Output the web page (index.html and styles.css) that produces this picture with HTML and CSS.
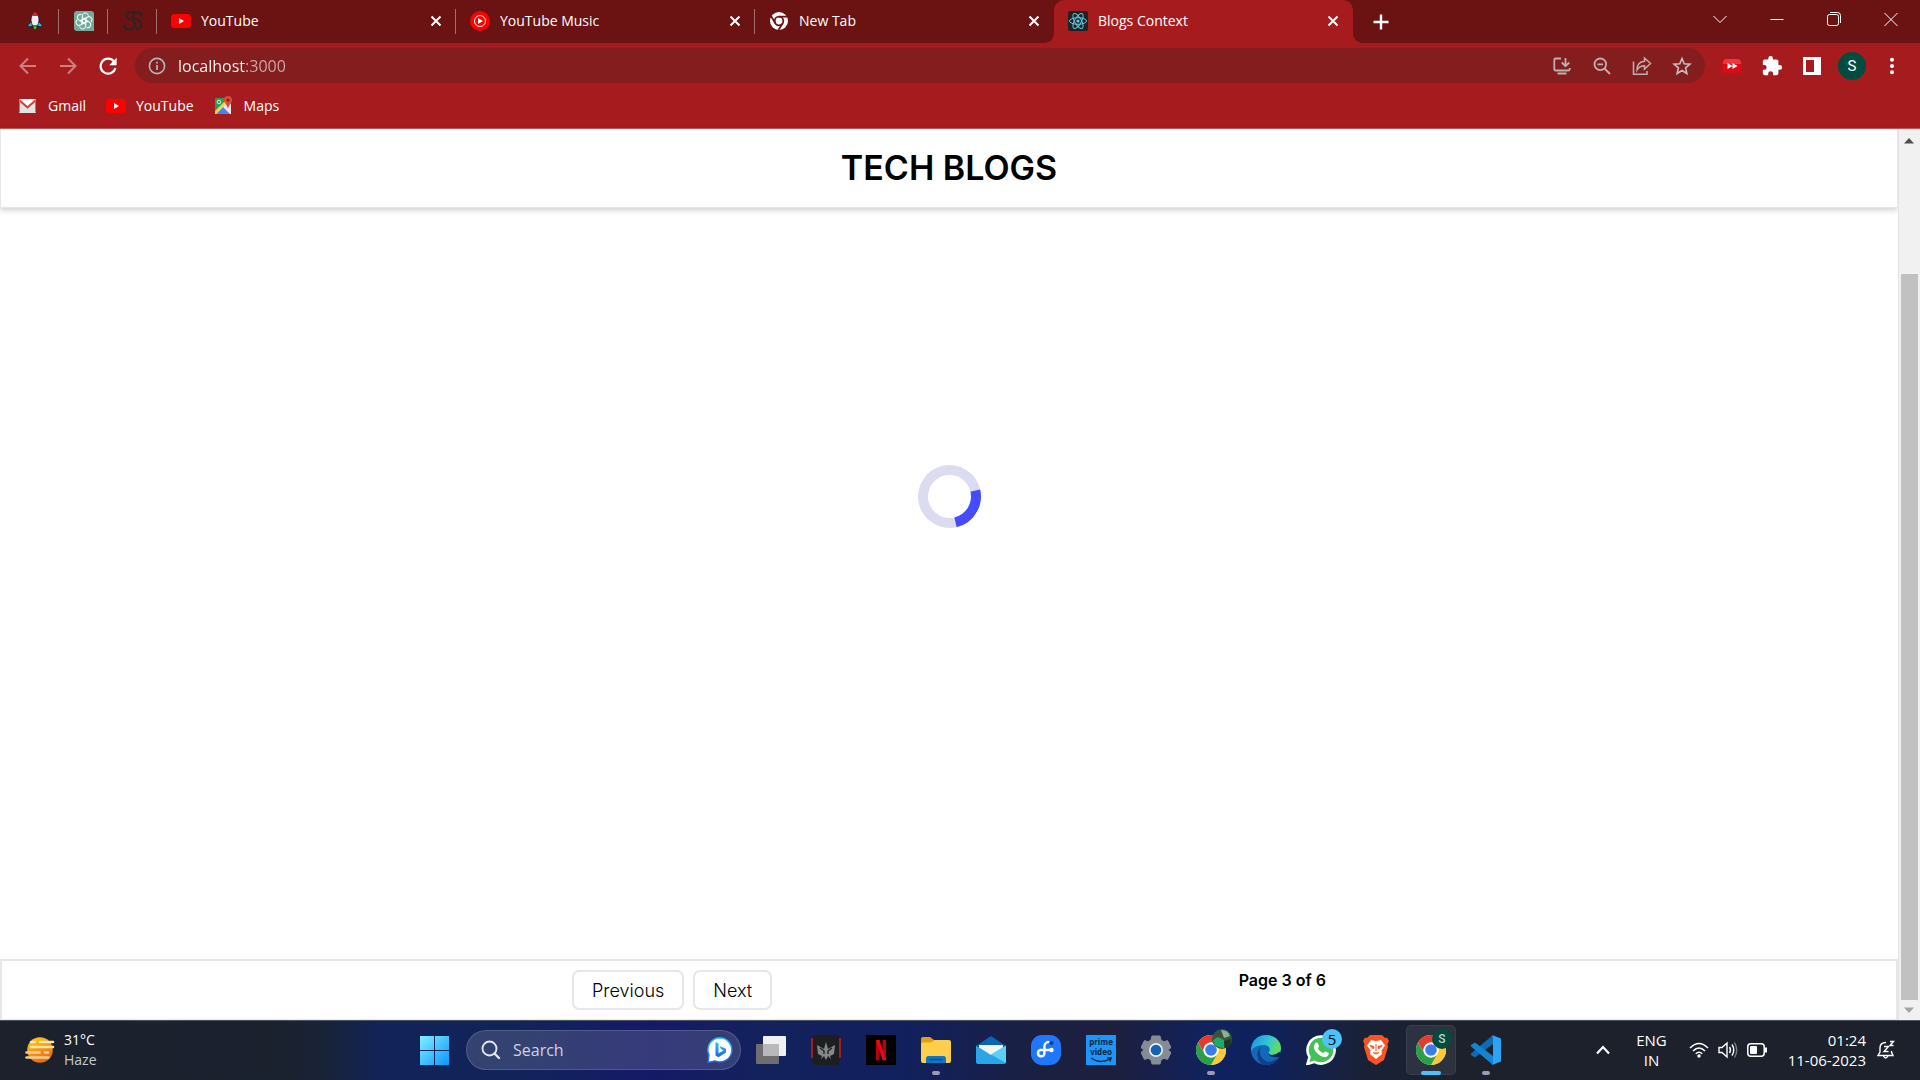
FILE: index.html
```html
<!DOCTYPE html>
<html lang="en">
<head>
<meta charset="utf-8">
<title>Blogs Context</title>
<link rel="stylesheet" href="styles.css">
</head>
<body>
<svg class="sprite" aria-hidden="true">
  <symbol id="close" viewBox="0 0 16 16"><path d="M3.5 3.5l9 9M12.5 3.5l-9 9" stroke="#fff" stroke-width="2" fill="none"/></symbol>
  <symbol id="youtube" viewBox="0 0 20 20"><rect y="3" width="20" height="14" rx="3.5" fill="#f00"/><path d="M8 7l5 3-5 3z" fill="#fff"/></symbol>
  <symbol id="chrome" viewBox="0 0 30 30">
    <circle cx="15" cy="15" r="15" fill="#fff"/>
    <path d="M2 7.5A15 15 0 0 1 28 7.500H15a7.500 7.500 0 0 0-6.500 11.200z" fill="#e33b2e"/>
    <path d="M28 7.500A15 15 0 0 1 15 30l6.500-11.300A7.500 7.500 0 0 0 15 7.500z" fill="#fcc934"/>
    <path d="M15 30A15 15 0 0 1 2 7.500l6.500 11.200a7.500 7.500 0 0 0 13 0z" fill="#2c9d49"/>
    <circle cx="15" cy="15" r="7.500" fill="#fff"/><circle cx="15" cy="15" r="5.800" fill="#3b7de8"/>
  </symbol>
</svg>

<header class="browser">
  <div class="tabstrip">
    <button class="pin" aria-label="Rocket">
      <svg width="20" height="20" viewBox="0 0 20 20"><path d="M7 10l-4 4v2l5-1zM13 10l4 4v2l-5-1z" fill="#2bb3f3" stroke="#111" stroke-width=".7"/><path d="M10 1c3 2 4 5 4 8 0 2-1 5-2 6H8c-1-1-2-4-2-6 0-3 1-6 4-8z" fill="#eef1f5" stroke="#111" stroke-width=".8"/><path d="M10 1c1.500 1 2.500 2.500 3 4H7c.5-1.500 1.500-3 3-4z" fill="#d8222a"/><path d="M8 15h4c0 2-1 3-2 4-1-1-2-2-2-4z" fill="#48cf2c" stroke="#111" stroke-width=".6"/></svg>
    </button>
    <button class="pin" aria-label="ChatGPT">
      <svg width="20" height="20" viewBox="0 0 20 20"><path d="M3 0h14a3 3 0 0 1 3 3v17H3a3 3 0 0 1-3-3V3a3 3 0 0 1 3-3z" fill="#74aa9c"/><g fill="none" stroke="#fff" stroke-width="1"><path id="k" d="M8.300 7.500V4.800a3 3 0 0 1 4.500-2.400 3 3 0 0 1 1.600 2.200M8.300 7.500v4l3.400 2"/><use href="#k" transform="rotate(60 10 10)"/><use href="#k" transform="rotate(120 10 10)"/><use href="#k" transform="rotate(180 10 10)"/><use href="#k" transform="rotate(240 10 10)"/><use href="#k" transform="rotate(300 10 10)"/></g></svg>
    </button>
    <button class="pin" aria-label="SS">
      <svg width="20" height="20" viewBox="0 0 20 20" fill="none" stroke="#2c2426"><path d="M13 1.500C9 0 2 1 3 5c1 3 8 3.500 9 7 1 4-3 7-7 6.500-2 0-4-1.500-4-3.500" stroke-width="2"/><path d="M18.500 5c0-2.500-2.500-4-5-3.500-4 .5-5 4-2 6 3 1.500 7 2 7 6 0 3-3 4.500-6 4.500" stroke-width="1.800"/><path d="M0 15h3M17 4.500h3" stroke-width="2"/></svg>
    </button>
    <div class="tab"><svg width="20" height="20"><use href="#youtube"/></svg><span class="tab-title">YouTube</span><button class="icon-btn" aria-label="Close tab"><svg width="16" height="16"><use href="#close"/></svg></button></div>
    <div class="tab"><svg width="20" height="20" viewBox="0 0 20 20"><circle cx="10" cy="10" r="10" fill="#f00"/><circle cx="10" cy="10" r="5.500" fill="none" stroke="#fff"/><path d="M8 7l5 3-5 3z" fill="#fff"/></svg><span class="tab-title">YouTube Music</span><button class="icon-btn" aria-label="Close tab"><svg width="16" height="16"><use href="#close"/></svg></button></div>
    <div class="tab before-active"><svg width="20" height="20" viewBox="0 0 20 20"><circle cx="10" cy="10" r="9" fill="#fff"/><circle cx="10" cy="10" r="4.300" fill="none" stroke="#6b1212" stroke-width="1.800"/><path d="M10 5.700h9M6.300 12.200L2 5M13.700 12.200L9.500 19" stroke="#6b1212" stroke-width="1.700"/></svg><span class="tab-title">New Tab</span><button class="icon-btn" aria-label="Close tab"><svg width="16" height="16"><use href="#close"/></svg></button></div>
    <div class="tab active"><svg width="20" height="20" viewBox="0 0 20 20"><rect width="20" height="20" rx="2" fill="#222"/><g fill="none" stroke="#5ccbe6" stroke-width="1"><ellipse cx="10" cy="10" rx="8.500" ry="3.300"/><ellipse cx="10" cy="10" rx="8.500" ry="3.300" transform="rotate(60 10 10)"/><ellipse cx="10" cy="10" rx="8.500" ry="3.300" transform="rotate(120 10 10)"/></g><circle cx="10" cy="10" r="1.600" fill="#5ccbe6"/></svg><span class="tab-title">Blogs Context</span><button class="icon-btn" aria-label="Close tab"><svg width="16" height="16"><use href="#close"/></svg></button></div>
    <button class="new-tab" aria-label="New tab"><svg width="16" height="16" viewBox="0 0 16 16"><path d="M8 .5v15M.5 8h15" stroke="#fff" stroke-width="2.400"/></svg></button>
    <div class="window-controls">
      <button aria-label="Search tabs"><svg width="14" height="14" viewBox="0 0 14 14"><path d="M.5 4L7 10.500 13.500 4"/></svg></button>
      <button aria-label="Minimize"><svg width="14" height="14" viewBox="0 0 14 14"><path d="M.5 7.500h13"/></svg></button>
      <button aria-label="Restore"><svg width="14" height="14" viewBox="0 0 14 14"><rect x=".5" y="2.500" width="11" height="11" rx="2"/><path d="M3 .5h7.500a3 3 0 0 1 3 3V11"/></svg></button>
      <button aria-label="Close"><svg width="14" height="14" viewBox="0 0 14 14"><path d="M.5 1l13 13M13.500 1l-13 13"/></svg></button>
    </div>
  </div>

  <div class="toolbar">
    <button class="tool" aria-label="Back"><svg width="18" height="18" viewBox="0 0 18 18" class="faded"><path d="M17 9H2M9 1.500L1.500 9 9 16.500"/></svg></button>
    <button class="tool" aria-label="Forward"><svg width="18" height="18" viewBox="0 0 18 18" class="faded"><path d="M1 9h15M9 1.500L16.500 9 9 16.500"/></svg></button>
    <button class="tool" aria-label="Reload"><svg width="18" height="18" viewBox="0 0 18 18" fill="none"><path d="M15 4.500A7.500 7.500 0 1 0 16.400 11" stroke="#fff" stroke-width="2.200"/><path d="M17.600.8v7.400h-7.400z" fill="#fff"/></svg></button>
    <div class="omnibox">
      <svg width="18" height="18" viewBox="0 0 18 18"><circle cx="9" cy="9" r="7.600" fill="none" stroke="#b3b3b8" stroke-width="1.600"/><path d="M9 8v5M9 4.800v1.800" stroke="#b3b3b8" stroke-width="1.800"/></svg>
      <input class="url" type="text" value="localhost:3000" aria-label="Address">
      <button class="tool" aria-label="Install app"><svg width="18" height="18" viewBox="0 0 18 18" fill="none" stroke="#bdb0b0" stroke-width="1.800"><path d="M8 1.500H2.500Q1.300 1.500 1.300 2.700v9.600q0 1.200 1.200 1.200h13q1.200 0 1.200-1.200V11M12.500 1v7.500M8.800 5.500l3.700 3.700 3.700-3.700"/><path d="M4.500 15.500h9v2h-9z" fill="#bdb0b0" stroke="none"/></svg></button>
      <button class="tool" aria-label="Zoom"><svg width="18" height="18" viewBox="0 0 18 18" fill="none" stroke="#bdb0b0" stroke-width="1.800"><circle cx="7.300" cy="7.300" r="5.800"/><path d="M11.500 11.500l5.500 5.500M4.500 7.300h5.600"/></svg></button>
      <button class="tool" aria-label="Share"><svg width="20" height="20" viewBox="0 0 20 20" fill="none" stroke="#bdb0b0" stroke-width="1.500"><path d="M1.500 5.500v12.800h13.500V15M12.500 2l6 5.500-6 5.500v-3.200c-4 0-6 1.500-7.500 4.200 0-5 2.500-8.500 7.500-8.800z"/></svg></button>
      <button class="tool" aria-label="Bookmark"><svg width="20" height="20" viewBox="0 0 20 20" fill="none" stroke="#c9bcbc" stroke-width="1.600"><path d="M10 2.500l2.200 5.300 5.700.4-4.300 3.700 1.300 5.600-4.900-3-4.900 3 1.300-5.600-4.300-3.700 5.700-.4z"/></svg></button>
    </div>
    <div class="extensions">
      <button class="tool" aria-label="Ad speedup"><svg width="20" height="20" viewBox="0 0 20 20"><rect y="3" width="20" height="14" rx="3.500" fill="#d80b16"/><path d="M1 7q0-4 4-4h10q4 0 4 4v1H1z" fill="#f0353c"/><path d="M5.500 7l5 3-5 3zM10.500 7l5 3-5 3z" fill="#fff"/></svg></button>
      <button class="tool" aria-label="Extensions"><svg width="22" height="22" viewBox="0 0 24 24" fill="#fff"><path d="M20.500 11H19V7a2 2 0 0 0-2-2h-4V3.500a2.500 2.500 0 0 0-5 0V5H4a2 2 0 0 0-2 2v3.800h1.500a2.700 2.700 0 0 1 0 5.400H2V20a2 2 0 0 0 2 2h3.800v-1.500a2.700 2.700 0 0 1 5.400 0V22H17a2 2 0 0 0 2-2v-4h1.500a2.500 2.500 0 0 0 0-5z"/></svg></button>
      <button class="tool" aria-label="Side panel"><svg width="18" height="18" viewBox="0 0 18 18"><path d="M0 0h18v18H0zM3 3v12h8V3z" fill="#fff" fill-rule="evenodd"/></svg></button>
      <button class="tool" aria-label="Profile"><span class="avatar">S</span></button>
      <button class="tool" aria-label="Menu"><svg width="6" height="18" viewBox="0 0 6 18" fill="#fff"><circle cx="3" cy="2.800" r="2"/><circle cx="3" cy="9" r="2"/><circle cx="3" cy="15.200" r="2"/></svg></button>
    </div>
  </div>

  <nav class="bookmarks">
    <a href="#"><svg width="20" height="20" viewBox="0 0 20 20"><rect x="1" y="3" width="17" height="14" rx="1" fill="#e3e3e3"/><path d="M2 3h15l-7.500 7z" fill="#fff"/><path d="M1 4l8.500 7.500L18 4" fill="none" stroke="#d93c32" stroke-width="2"/><path d="M1.500 16V4M17.500 16V4" stroke="#d8685f"/></svg>Gmail</a>
    <a href="#"><svg width="20" height="20"><use href="#youtube"/></svg>YouTube</a>
    <a href="#"><svg width="20" height="20" viewBox="0 0 20 20"><rect x="1" y="2" width="16" height="16" rx="1" fill="#2b9a55"/><path d="M1 17L14 5l3 3v10H1z" fill="#e8e8e8"/><path d="M2 18l7-7 7 7z" fill="#4384f3"/><path d="M1 15L12 4l2 2L2 18H1z" fill="#fbd14b"/><circle cx="5" cy="6" r="1.800" fill="none" stroke="#d8efe0"/><path d="M14 0a4 4 0 0 1 4 4c0 3-3 4-4 9-1-5-4-6-4-9a4 4 0 0 1 4-4z" fill="#dd4b3e"/><circle cx="14" cy="4" r="1.500" fill="#7e1d18"/></svg>Maps</a>
  </nav>
</header>

<div class="viewport">
  <div class="page">
    <header class="page-header"><h1>TECH BLOGS</h1></header>
    <main class="content"><div class="spinner" role="status" aria-label="Loading"></div></main>
    <footer class="pagination">
      <div class="pagination-inner">
        <div class="pager">
          <button>Previous</button>
          <button>Next</button>
        </div>
        <p>Page 3 of 6</p>
      </div>
    </footer>
  </div>
  <div class="scrollbar" aria-hidden="true">
    <svg width="10" height="6" viewBox="0 0 10 6"><path d="M5 0l5 5.500H0z" fill="#505050"/></svg>
    <div class="track"><div class="thumb"></div></div>
    <svg width="10" height="6" viewBox="0 0 10 6"><path d="M5 6l5-5.500H0z" fill="#a3a3a3"/></svg>
  </div>
</div>

<footer class="taskbar">
  <button class="weather">
    <svg width="30" height="26" viewBox="0 0 30 26"><defs><linearGradient id="sun" x2=".5" y2="1"><stop stop-color="#ffd21a"/><stop offset="1" stop-color="#ee6a12"/></linearGradient></defs><circle cx="15" cy="13" r="12.800" fill="url(#sun)"/><g stroke="#fbe7a6" stroke-width="2.600" stroke-linecap="round"><path d="M6 5h4M15 5h13M6 10h22"/></g><g stroke="#efcf92" stroke-width="2.600" stroke-linecap="round"><path d="M1.500 15.500h13M20 15.500h3M1.500 20.500h22"/></g></svg>
    <span class="lines"><span>31°C</span><span class="muted">Haze</span></span>
  </button>

  <div class="apps">
    <button class="app" aria-label="Start"><svg width="30" height="30" viewBox="0 0 30 30"><defs><linearGradient id="win" x2="1" y2="1"><stop stop-color="#7ff0ff"/><stop offset="1" stop-color="#0a96ff"/></linearGradient></defs><path d="M1 1h14v14H1zM16 1h14v14H16zM1 16h14v14H1zM16 16h14v14H16z" fill="url(#win)"/></svg></button>
    <label class="search">
      <svg width="20" height="20" viewBox="0 0 20 20"><circle cx="8.500" cy="8.500" r="7" fill="none" stroke="#e6e8f0" stroke-width="1.800"/><path d="M13.500 13.500l4.500 4.500" stroke="#e6e8f0" stroke-width="2.400" stroke-linecap="round"/></svg>
      <input type="text" placeholder="Search" aria-label="Search">
      <svg width="26" height="26" viewBox="0 0 26 26"><defs><linearGradient id="bing" x2="0" y2="1"><stop stop-color="#2ec4f0"/><stop offset="1" stop-color="#1769e8"/></linearGradient></defs><path d="M13 1a12 12 0 1 1-5 23l-7 1.500L2 18A12 12 0 0 1 13 1z" fill="#fff" stroke="url(#bing)" stroke-width="1.400"/><path d="M8.500 5l3 1.200v10l5-2.800-2.600-1.400-1.300-3 6.400 2.800v3.700l-7.500 4.700-3-1.800z" fill="url(#bing)"/></svg>
    </label>
    <button class="app" aria-label="Task view"><svg width="30" height="30" viewBox="0 0 30 30"><rect y="9" width="23" height="20" rx="1" fill="#6e6e70"/><rect x="7" y="1" width="23" height="20" rx="1" fill="#f0f0f1"/><path d="M7 9h16v12H7z" fill="#b9b9bc"/></svg></button>
    <button class="app" aria-label="PredatorSense"><svg width="30" height="30" viewBox="0 0 30 30"><path d="M3 0h24l3 3v20l-3 7H3l-3-7V3z" fill="#1d1e20"/><path d="M1 3v20M29 3v20" stroke="#c0202a" stroke-width="1.600"/><path d="M6 10l7 4 2-7 2 7 7-4-1 9-4 2 1 3-3-3-2 4-2-4-3 3 1-3-4-2z" fill="#85878b"/><path d="M9 13l4 3v3M21 13l-4 3v3" stroke="#1d1e20" stroke-width="1.300" fill="none"/></svg></button>
    <button class="app" aria-label="Netflix"><svg width="30" height="30" viewBox="0 0 30 30"><path d="M0 0h30v30H0z"/><path d="M10 5h3.500v20l-3.500.4zM16.500 5H20v20.400l-3.500-.4z" fill="#b1060f"/><path d="M10 5h3.500L20 25.400l-3.500-.4z" fill="#e50914"/></svg></button>
    <button class="app running" aria-label="File Explorer"><svg width="30" height="30" viewBox="0 0 30 30"><path d="M0 4q0-2 2-2h7l4 3v7H0z" fill="#e0a010"/><path d="M0 9q0-1.500 1.500-1.500H10L13.500 5H28q2 0 2 2v19q0 2-2 2H2q-2 0-2-2z" fill="#fdcf4a"/><path d="M5 28v-4.500Q5 21 7.500 21h15q2.500 0 2.500 2.500V28z" fill="#1276c4"/><path d="M9 24.500h12" stroke="#0b4f8c" stroke-width="1.500" stroke-linecap="round"/></svg></button>
    <button class="app" aria-label="Mail"><svg width="30" height="30" viewBox="0 0 30 30"><path d="M0 11L15 1l15 10z" fill="#0c64b4"/><path d="M3 10h24v10H3z" fill="#f4f4f5"/><path d="M0 10.500L15 20l15-9.500V27q0 2-2 2H2q-2 0-2-2z" fill="#2aa6e6"/><path d="M15 19.500l15-9V28z" fill="#5ad0f5"/></svg></button>
    <button class="app" aria-label="Freeform"><svg width="30" height="30" viewBox="0 0 30 30"><rect width="30" height="30" rx="11" fill="#1f78fb"/><path d="M21 15H9.500a3.200 3.200 0 1 0 3.900 3.200V11.500a4.500 4.500 0 0 1 4-4.500" fill="none" stroke="#fff" stroke-width="2.400" stroke-linecap="round"/><circle cx="20.500" cy="15" r="2.200" fill="#fff"/><circle cx="20.500" cy="8" r="2" fill="#10398f"/></svg></button>
    <button class="app" aria-label="Prime Video"><span class="prime"><span>prime</span><span>video</span><svg width="22" height="6" viewBox="0 0 22 6"><path d="M1 1q9 6.500 19 1M17 1h4l-1 3.500" fill="none" stroke="#10253c" stroke-width="1.400"/></svg></span></button>
    <button class="app" aria-label="Settings"><svg width="30" height="30" viewBox="0 0 30 30"><path d="M11 1h8l1 4 3 1.800 3.500-1.300 3.500 7-2.800 2.500 2.800 2.500-3.500 7-3.500-1.300L20 25l-1 4h-8l-1-4-3-1.800-3.500 1.300-3.500-7L2.800 15 0 12.500l3.500-7L7 6.800 10 5z" fill="#858c94" stroke="#858c94" stroke-linejoin="round"/><circle cx="15" cy="15" r="7" fill="#e8eef4"/><circle cx="15" cy="15" r="5.300" fill="#1363b4"/></svg></button>
    <button class="app running" aria-label="Chrome"><svg width="30" height="30"><use href="#chrome"/></svg><svg class="badge" width="20" height="20" viewBox="0 0 20 20"><circle cx="10" cy="10" r="10" fill="#2e5a37"/><path d="M9 1a9 9 0 0 1 9 6l-6 2z" fill="#91ad9a"/><path d="M1 11l5-3 6 3v8Q2 19 1 11z" fill="#21a866"/><circle cx="7" cy="6" r="2.200" fill="#5b4035"/><path d="M12 12l7-2q0 7-6 9z" fill="#1b3520"/></svg></button>
    <button class="app" aria-label="Edge"><svg width="30" height="30" viewBox="0 0 30 30"><defs><linearGradient id="edge" x2="1" y2=".3"><stop stop-color="#1c8fe0"/><stop offset=".6" stop-color="#31c3d9"/><stop offset="1" stop-color="#5fdc68"/></linearGradient></defs><circle cx="15" cy="15" r="15" fill="#1169bc"/><path d="M0 14C1 5 7 0 15 0c9 0 15 6 15 13 0 5-4 7-8 7-3 0-5-1-4-3 2-3 0-7-5-7-7 0-12 3-13 7z" fill="url(#edge)"/><path d="M11 11c-3 3-3 8 0 12 4 5 11 5 17-1-3 6-8 8-13 8C8 30 5 22 7 16c1-2 2-4 4-5z" fill="#123f86"/><path d="M17.500 18c0 3 4 5 10.500 4l3-1v-3l-3-1q-3 3-7 3-3 0-3.500-2z" fill="#12235a"/></svg></button>
    <button class="app" aria-label="WhatsApp"><svg width="30" height="30" viewBox="0 0 30 30"><path d="M15 1.500a13.500 13.500 0 1 1-6.500 25.300L1.500 29l2-7A13.500 13.500 0 0 1 15 1.500z" fill="#42c254" stroke="#fff" stroke-width="2.600"/><path d="M9 8.500c1-1.500 2.500-1 3 0l1 2.500c.3 1-1.500 2-1 2.500 1.300 2.300 3 3.700 5 4.500.8.300 1.500-2 2.500-1.500l2.800 1.300c1.200.7-.3 3.700-2.300 4.200-3 .7-7-1.500-9.500-4.500C8 14.500 7 11.500 9 8.500z" fill="#fff"/></svg><span class="badge count">5</span></button>
    <button class="app" aria-label="Brave"><svg width="26" height="30" viewBox="0 0 26 30"><path d="M7 0h12l3 3 2-.5L26 6l-1.500 3 .5 3-4 13-8 5-8-5L1 12l.5-3L0 6l2-3.500L4 3z" fill="#fb5423"/><path d="M8 5l5 1 5-1 4 5.500-3.500 5L19 19l-6 5-6-5 .5-3.500L4 10.500z" fill="#fff"/><path d="M7 10.500l4 1-.5 2.500zM19 10.500l-4 1 .5 2.500zM13 9v7M10 17.500l3 1.500 3-1.500" fill="#fb5423" stroke="#fb5423"/></svg></button>
    <button class="app running current" aria-label="Chrome, profile S"><svg width="30" height="30"><use href="#chrome"/></svg><span class="badge profile">S</span></button>
    <button class="app running" aria-label="Visual Studio Code"><svg width="30" height="30" viewBox="0 0 30 30"><path d="M22 0v9L4 22.500 0 20v-1.500z" fill="#0d6cb8"/><path d="M22 30v-9L4 7.500 0 10v1.500z" fill="#1583d0"/><path d="M21 0l9 3.500v23L21 30l1-2V2z" fill="#2ba4f3"/></svg></button>
  </div>

  <div class="tray">
    <button aria-label="Show hidden icons"><svg width="14" height="10" viewBox="0 0 14 10"><path d="M1 8.500l6-6.500 6 6.500" fill="none" stroke="#fff" stroke-width="2.200"/></svg></button>
    <button class="lines lang"><span>ENG</span><span>IN</span></button>
    <button class="status" aria-label="Network, volume, battery">
      <svg width="20" height="16" viewBox="0 0 20 16" fill="none" stroke="#fff" stroke-width="1.500"><path d="M1 6q9-9 18 0M4 9q6-6 12 0M6.700 11.700q3.300-3 6.600 0"/><circle cx="10" cy="14" r="1" fill="#fff"/></svg>
      <svg width="20" height="18" viewBox="0 0 20 18" fill="none" stroke="#fff" stroke-width="1.400"><path d="M1 6.500h3L9 2v14l-5-4.500H1zM11.500 6q2 3 0 6M14 3.500q3.500 5.500 0 11"/><path d="M16.500 1.500q4.500 7.500 0 15" stroke="#787c84"/></svg>
      <svg width="21" height="14" viewBox="0 0 21 14"><rect x=".8" y=".8" width="16.400" height="12.400" rx="3" fill="none" stroke="#fff" stroke-width="1.500"/><rect x="3" y="3" width="7" height="8" rx="1" fill="#fff"/><path d="M19 4.500v5" stroke="#fff" stroke-width="2"/></svg>
    </button>
    <button class="lines clock"><span>01:24</span><span>11-06-2023</span></button>
    <button aria-label="Notifications"><svg width="18" height="20" viewBox="0 0 18 20" fill="none" stroke="#fff" stroke-width="1.400"><path d="M9 2.500C5 2.500 3 5 3 8v4l-2 3.500h15L14.500 12v-1M6.500 16q2 4 4.500 0M7 6.500h4.500L7 11.500h4.500M13 1.500h3.500L13 5.500h3.500"/></svg></button>
  </div>
</footer>
</body>
</html>
```
FILE: styles.css
```css
* { box-sizing: border-box; }

body {
  margin: 0;
  min-height: 100vh;
  display: flex;
  flex-direction: column;
  background: #fff;
  color: #000;
  font-family: Inter, "Liberation Sans", sans-serif;
}

button {
  margin: 0;
  padding: 0;
  border: 0;
  background: none;
  color: inherit;
  font: inherit;
  display: flex;
  align-items: center;
  justify-content: center;
}

input {
  min-width: 0;
  padding: 0;
  border: 0;
  outline: 0;
  background: none;
  color: inherit;
  font: inherit;
}

svg { flex: none; display: block; }

.sprite { position: absolute; width: 0; height: 0; }

/* Browser window */
.browser {
  background: #a61c1e;
  border-bottom: 1px solid #c0595b;
  color: #fff;
  font: 14px/20px "Open Sans", "Noto Sans", sans-serif;
}

.tabstrip {
  display: flex;
  height: 43px;
  padding-left: 10px;
  background: #6b1212;
}

.pin, .tab {
  padding-bottom: 2px;
  background: linear-gradient(#a07070, #a07070) right 9px / 1px 25px no-repeat;
}

.pin { flex: 0 0 49px; }

.tab {
  flex: 0 1 299px;
  min-width: 0;
  display: flex;
  align-items: center;
  gap: 10px;
  padding-left: 14px;
  padding-right: 12px;
}

.tab.before-active { background: none; }

.tab-title { flex: 1; overflow: hidden; white-space: nowrap; }

.tab.active {
  position: relative;
  background: #a61c1e;
  border-radius: 10px 10px 0 0;
}

.tab.active::before,
.tab.active::after {
  content: "";
  position: absolute;
  bottom: 0;
  width: 10px;
  height: 10px;
}

.tab.active::before {
  right: 100%;
  background: radial-gradient(circle at 0 0, transparent 10px, #a61c1e 10px);
}

.tab.active::after {
  left: 100%;
  background: radial-gradient(circle at 100% 0, transparent 10px, #a61c1e 10px);
}

.new-tab { width: 56px; }

.window-controls { display: flex; margin-left: auto; padding-right: 1px; height: 37px; }
.window-controls button { width: 57px; }
.window-controls svg { fill: none; stroke: #fff; stroke-width: 1; }

.toolbar {
  display: flex;
  gap: 7px;
  padding: 5px 8px;
}

.toolbar > .tool + .tool { margin-left: -7px; }
.tool { width: 40px; height: 35px; flex: none; }
.faded { fill: none; stroke: #cd7f80; stroke-width: 2; }

.omnibox {
  flex: 1;
  min-width: 0;
  display: flex;
  align-items: center;
  padding: 0 3px 0 13px;
  border-radius: 18px;
  background: #841e1e;
}

.url {
  flex: 1;
  margin-left: 12px;
  height: 35px;
  font-size: 16px;
  color: #fff;
  background: linear-gradient(90deg, #fff 67px, #d0a9a9 67px);
  -webkit-background-clip: text;
  background-clip: text;
  -webkit-text-fill-color: transparent;
}

.extensions { display: flex; }

.avatar {
  width: 28px;
  height: 28px;
  border-radius: 50%;
  background: #004d40;
  font: 15px/28px Roboto, sans-serif;
  text-align: center;
}

.bookmarks {
  display: flex;
  gap: 20px;
  padding: 8px 18px 12px;
}

.bookmarks a {
  display: flex;
  align-items: center;
  gap: 10px;
  color: inherit;
  text-decoration: none;
}

/* Blog page */
.viewport { flex: 1; display: flex; }

.page {
  flex: 1;
  min-width: 0;
  display: flex;
  flex-direction: column;
}

.page-header {
  padding: 18px 0;
  border: 1px solid #e5e7eb;
  border-top: 0;
  box-shadow: 0 2px 6px rgba(0, 0, 0, .2);
}

h1 {
  margin: 0;
  font-size: 34px;
  line-height: 42px;
  font-weight: 600;
  text-align: center;
}

.content {
  flex: 1;
  display: flex;
  justify-content: center;
  align-items: flex-start;
  padding: 257px 0 24px;
}

.spinner {
  width: 63px;
  height: 63px;
  border: 10px solid #dbdcef;
  border-right-color: #474bff;
  border-radius: 50%;
  transform: rotate(32deg);
}

.pagination { border: 2px solid #e5e7eb; border-bottom-width: 1px; }

.pagination-inner {
  display: flex;
  justify-content: space-between;
  max-width: 754px;
  margin: 0 auto;
  padding: 9px 0;
}

.pager { display: flex; gap: 9px; }

.pager button {
  height: 40px;
  padding: 0 18px;
  border: 2px solid #e5e7eb;
  border-radius: 7px;
  font-size: 18px;
  font-weight: 300;
}

.pagination p {
  margin: 0;
  font-size: 16px;
  line-height: 20px;
  font-weight: 600;
}

.scrollbar {
  width: 22px;
  flex: none;
  display: flex;
  flex-direction: column;
  align-items: center;
  gap: 7px;
  padding: 9px 1px 7px 0;
  border-left: 1px solid #e4e4e4;
  background: #f1f1f1;
}

.track {
  flex: 1;
  width: 17px;
  display: flex;
  flex-direction: column;
  justify-content: flex-end;
}

.thumb { height: 85.5%; background: #c1c1c1; }

/* Taskbar */
.taskbar {
  display: grid;
  grid-template-columns: 1fr auto 1fr;
  align-items: center;
  height: 60px;
  padding-bottom: 1px;
  border-top: 1px solid #4b5563;
  color: #fff;
  font: 15px/20px "Open Sans", "Noto Sans", sans-serif;
  background: linear-gradient(90deg, #1c212c 0, #1b222f 15%, #182338 17%, #12235a 20%, #12235a 27%, #151a66 34%, #13225c 40%, #11205e 47%, #1b2042 54%, #1d1f3d 58%, #10225f 63%, #0f215c 66%, #1a2137 71%, #1c212c 76%);
}

.lines {
  display: flex;
  flex-direction: column;
  align-items: flex-start;
  padding-bottom: 1px;
}

.muted { color: #c6c8cc; }

.weather { gap: 9px; margin-left: 25px; justify-self: start; font-size: 14px; }

.apps { display: flex; gap: 5px; }

.app {
  position: relative;
  width: 50px;
  height: 50px;
  border-radius: 5px;
}

.app.running::after {
  content: "";
  position: absolute;
  bottom: 0;
  width: 8px;
  height: 4px;
  border-radius: 2px;
  background: #9a9cb4;
}

.app.current {
  background: rgba(255, 255, 255, .08);
  box-shadow: inset 0 0 0 1px rgba(255, 255, 255, .06);
}

.app.current::after { width: 20px; background: #4cc2ff; }

.badge { position: absolute; top: 4px; right: 4px; }

.count, .profile {
  width: 20px;
  height: 20px;
  border-radius: 50%;
  background: #4cc2ff;
  color: #000;
}

.profile { background: #054b40; color: #b9cfca; font: 500 12px/20px Roboto, sans-serif; }

.prime {
  width: 30px;
  height: 30px;
  display: flex;
  flex-direction: column;
  align-items: center;
  background: #1b96fb;
  color: #10253c;
  padding-top: 2px;
  font: 700 8px/10px "Open Sans", sans-serif;
}

.search {
  width: 275px;
  height: 40px;
  margin: 5px 0 5px 2px;
  display: flex;
  align-items: center;
  gap: 12px;
  padding: 0 7px 0 14px;
  border: 1px solid rgba(255, 255, 255, .15);
  border-radius: 20px;
  background: rgba(255, 255, 255, .14);
}

.search input { flex: 1; font-size: 16px; color: #fff; }
.search input::placeholder { color: #cfd2e2; opacity: 1; }

.tray {
  display: flex;
  align-items: center;
  justify-content: flex-end;
  padding-right: 25px;
}

.lang { align-items: center; margin: 0 22px 0 26px; }
.status { gap: 9px; }
.clock { align-items: flex-end; margin: 0 11px 0 20px; }
```
